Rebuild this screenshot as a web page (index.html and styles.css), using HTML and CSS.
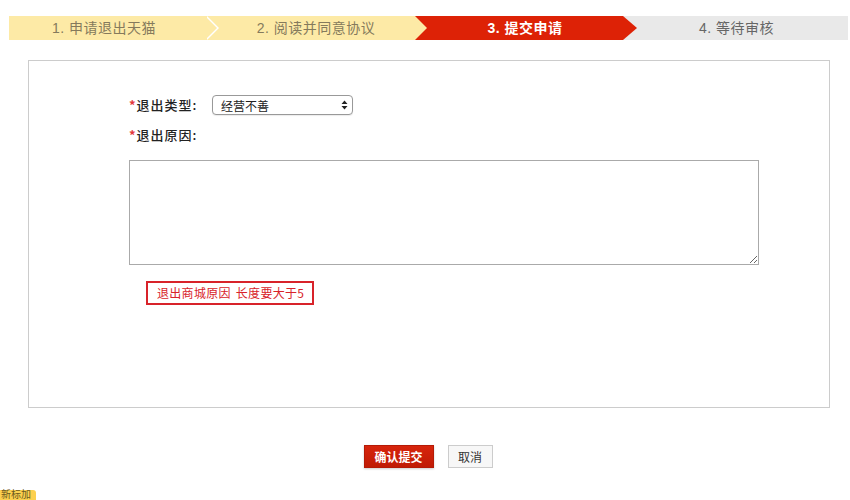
FILE: index.html
```html
<!DOCTYPE html>
<html>
<head>
  <meta charset="utf-8">
  <title>退出天猫 - 提交申请</title>
  <link rel="stylesheet" href="styles.css">
</head>
<body>
  <ol class="steps">
    <li class="step done first">1. 申请退出天猫</li>
    <li class="step done second">2. 阅读并同意协议</li>
    <li class="step current">3. 提交申请</li>
    <li class="step todo">4. 等待审核</li>
  </ol>

  <div class="panel">
    <form class="quit-form">
      <div class="row">
        <label for="quit_type"><em>*</em>退出类型:</label>
        <span class="select-wrap">
          <select id="quit_type" name="quit_type">
            <option>经营不善</option>
          </select>
          <svg class="select-arrow" width="7" height="10" viewBox="0 0 7 10">
            <path d="M3.5 0.5 L6.5 4 H0.5 Z M3.5 9.5 L6.5 6 H0.5 Z" fill="#222"/>
          </svg>
        </span>
      </div>
      <div class="row">
        <label for="quit_reason"><em>*</em>退出原因:</label>
      </div>
      <textarea id="quit_reason" name="quit_reason"></textarea>
      <div class="error-tip">退出商城原因 长度要大于5</div>
    </form>
  </div>

  <div class="actions">
    <button type="submit" class="btn btn-primary">确认提交</button>
    <button type="button" class="btn btn-cancel">取消</button>
  </div>

  <div class="corner-tag">新标加</div>
</body>
</html>
```

FILE: styles.css
```css
body {
  margin: 0;
  font-family: "Liberation Sans", "Noto Sans CJK SC", sans-serif;
  font-size: 12px;
  color: #333;
  background: #fff;
}

.steps {
  display: flex;
  list-style: none;
  margin: 16px 2px 0 9px;
  padding: 0;
  height: 24px;
}
.step {
  position: relative;
  box-sizing: border-box;
  padding-left: 12px;
  text-align: center;
  line-height: 24px;
  font-size: 14px;
  letter-spacing: 0.5px;
}
.step.first {
  width: 196px;
  padding: 0 6px 0 0;
}
.step.second { width: 210px; }
.step.current { width: 208px; }
.step.todo {
  flex: 1;
  padding: 0 12px 0 14px;
}
.step.done {
  background: #fdeaa6;
  color: #857a5c;
}
.step.current {
  background: #dd2206;
  color: #fff;
  font-weight: bold;
}
.step.todo {
  background: #e9e9e9;
  color: #666;
}
/* arrow pointing into the next step */
.step.done::after,
.step.current::after {
  content: "";
  position: absolute;
  top: 0;
  right: -12px;
  border-top: 12px solid transparent;
  border-bottom: 12px solid transparent;
  border-left: 12px solid;
  z-index: 2;
}
.step.done::after { border-left-color: #fdeaa6; }
.step.current::after {
  right: -14px;
  border-left-width: 14px;
  border-left-color: #dd2206;
}
.step.first::before {
  content: "";
  position: absolute;
  top: 0;
  right: -14px;
  border-top: 12px solid transparent;
  border-bottom: 12px solid transparent;
  border-left: 12px solid #fff;
  z-index: 1;
}

.panel {
  box-sizing: border-box;
  width: 802px;
  height: 348px;
  margin: 20px 0 0 28px;
  border: 1px solid #ccc;
  padding: 34px 0 0 100px;
}
.row {
  display: flex;
  align-items: center;
  height: 20px;
  margin-bottom: 10px;
}
.row label {
  width: 83px;
  font-family: "Noto Sans CJK SC", sans-serif;
  font-size: 13px;
  font-weight: 500;
  line-height: 20px;
  color: #222;
  letter-spacing: 1px;
}
.row em {
  font-style: normal;
  color: #e4393c;
  font-weight: bold;
}
.select-wrap {
  position: relative;
  display: inline-block;
}
.select-wrap select {
  appearance: none;
  -webkit-appearance: none;
  width: 141px;
  height: 20px;
  border: 1px solid #999;
  border-radius: 4px;
  background: #fff;
  padding: 0 0 0 8px;
  font-family: "Noto Sans CJK SC", sans-serif;
  font-size: 12px;
  color: #222;
  box-shadow: 0 1px 1px rgba(0, 0, 0, 0.08);
}
.select-arrow {
  position: absolute;
  right: 5px;
  top: 5px;
  pointer-events: none;
}

textarea {
  display: block;
  box-sizing: border-box;
  width: 630px;
  height: 105px;
  margin: 15px 0 0 0;
  border: 1px solid #aaa;
  font-family: inherit;
  font-size: 12px;
  resize: both;
}

.error-tip {
  box-sizing: border-box;
  width: 168px;
  height: 24px;
  margin: 16px 0 0 17px;
  padding: 0 9px;
  border: 2px solid #d8232a;
  font-family: "Noto Sans CJK SC", sans-serif;
  font-size: 12px;
  line-height: 20px;
  letter-spacing: 0.3px;
  word-spacing: 2px;
  color: #d8232a;
  white-space: nowrap;
}

.actions {
  display: flex;
  justify-content: center;
  gap: 14px;
  margin-top: 37px;
  padding-left: 6px;
}
.btn {
  height: 23px;
  padding: 0;
  border: 1px solid #ccc;
  background: #f7f7f7;
  font-family: "Noto Sans CJK SC", sans-serif;
  font-size: 12px;
  line-height: 21px;
  color: #333;
  cursor: pointer;
}
.btn-primary {
  width: 70px;
  border-color: #b51a06;
  background: linear-gradient(#d7250c, #c01b05);
  color: #fff;
  font-weight: bold;
  box-shadow: 0 1px 2px rgba(0, 0, 0, 0.2);
}
.btn-cancel {
  width: 45px;
}

.corner-tag {
  display: inline-block;
  margin-top: 22px;
  padding: 0 5px 0 1px;
  background: #fcd04f;
  border-radius: 0 3px 0 0;
  font-size: 10px;
  line-height: 10px;
  color: #6b5a1e;
}
```
